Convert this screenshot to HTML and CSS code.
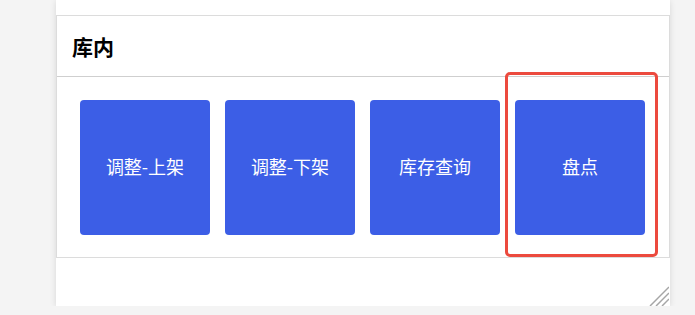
FILE: index.html
```html
<!DOCTYPE html>
<html lang="zh">
<head>
<meta charset="utf-8">
<link rel="stylesheet" href="styles.css">
</head>
<body>
<div class="panel">
  <section class="card">
    <div class="card-header">库内</div>
    <div class="card-body">
      <button class="tile">调整-上架</button>
      <button class="tile">调整-下架</button>
      <button class="tile">库存查询</button>
      <button class="tile">盘点</button>
    </div>
  </section>
  <div class="highlight"></div>
  <svg class="grip" width="20" height="20" viewBox="0 0 20 20">
    <line x1="20" y1="1" x2="1" y2="20" stroke="#a6a6a6" stroke-width="1.5"/>
    <line x1="20" y1="7" x2="7" y2="20" stroke="#a6a6a6" stroke-width="1.5"/>
    <line x1="20" y1="13" x2="13" y2="20" stroke="#a6a6a6" stroke-width="1.5"/>
  </svg>
</div>
</body>
</html>
```
FILE: styles.css
```css
html, body {
  margin: 0;
  padding: 0;
  background: #f4f4f4;
  font-family: "Noto Sans CJK SC", "Noto Sans", sans-serif;
}
.panel {
  position: relative;
  margin-left: 56px;
  width: 614px;
  height: 306px;
  background: #fff;
  box-shadow: 0 1px 6px rgba(0, 0, 0, 0.12);
  padding-top: 15px;
  box-sizing: border-box;
}
.card {
  border: 1px solid #dcdcdc;
  width: 614px;
  box-sizing: border-box;
}
.card-header {
  height: 60px;
  padding-left: 15px;
  display: flex;
  align-items: center;
  font-size: 21px;
  font-weight: bold;
  color: #000;
  border-bottom: 1px solid #cfcfcf;
}
.card-body {
  display: flex;
  gap: 15px;
  padding: 23px 23px 22px 23px;
}
.tile {
  width: 130px;
  height: 135px;
  border: none;
  border-radius: 4px;
  background: #3c5ee6;
  color: #fff;
  font-family: "Noto Sans CJK SC", "Noto Sans", sans-serif;
  font-size: 18px;
  padding: 0 0 4px 0;
}
.highlight {
  position: absolute;
  left: 449px;
  top: 72px;
  width: 153px;
  height: 185px;
  border: 3px solid #ec4a3e;
  border-radius: 5px;
  box-sizing: border-box;
}
.grip {
  position: absolute;
  right: 1px;
  bottom: 0;
}
```
